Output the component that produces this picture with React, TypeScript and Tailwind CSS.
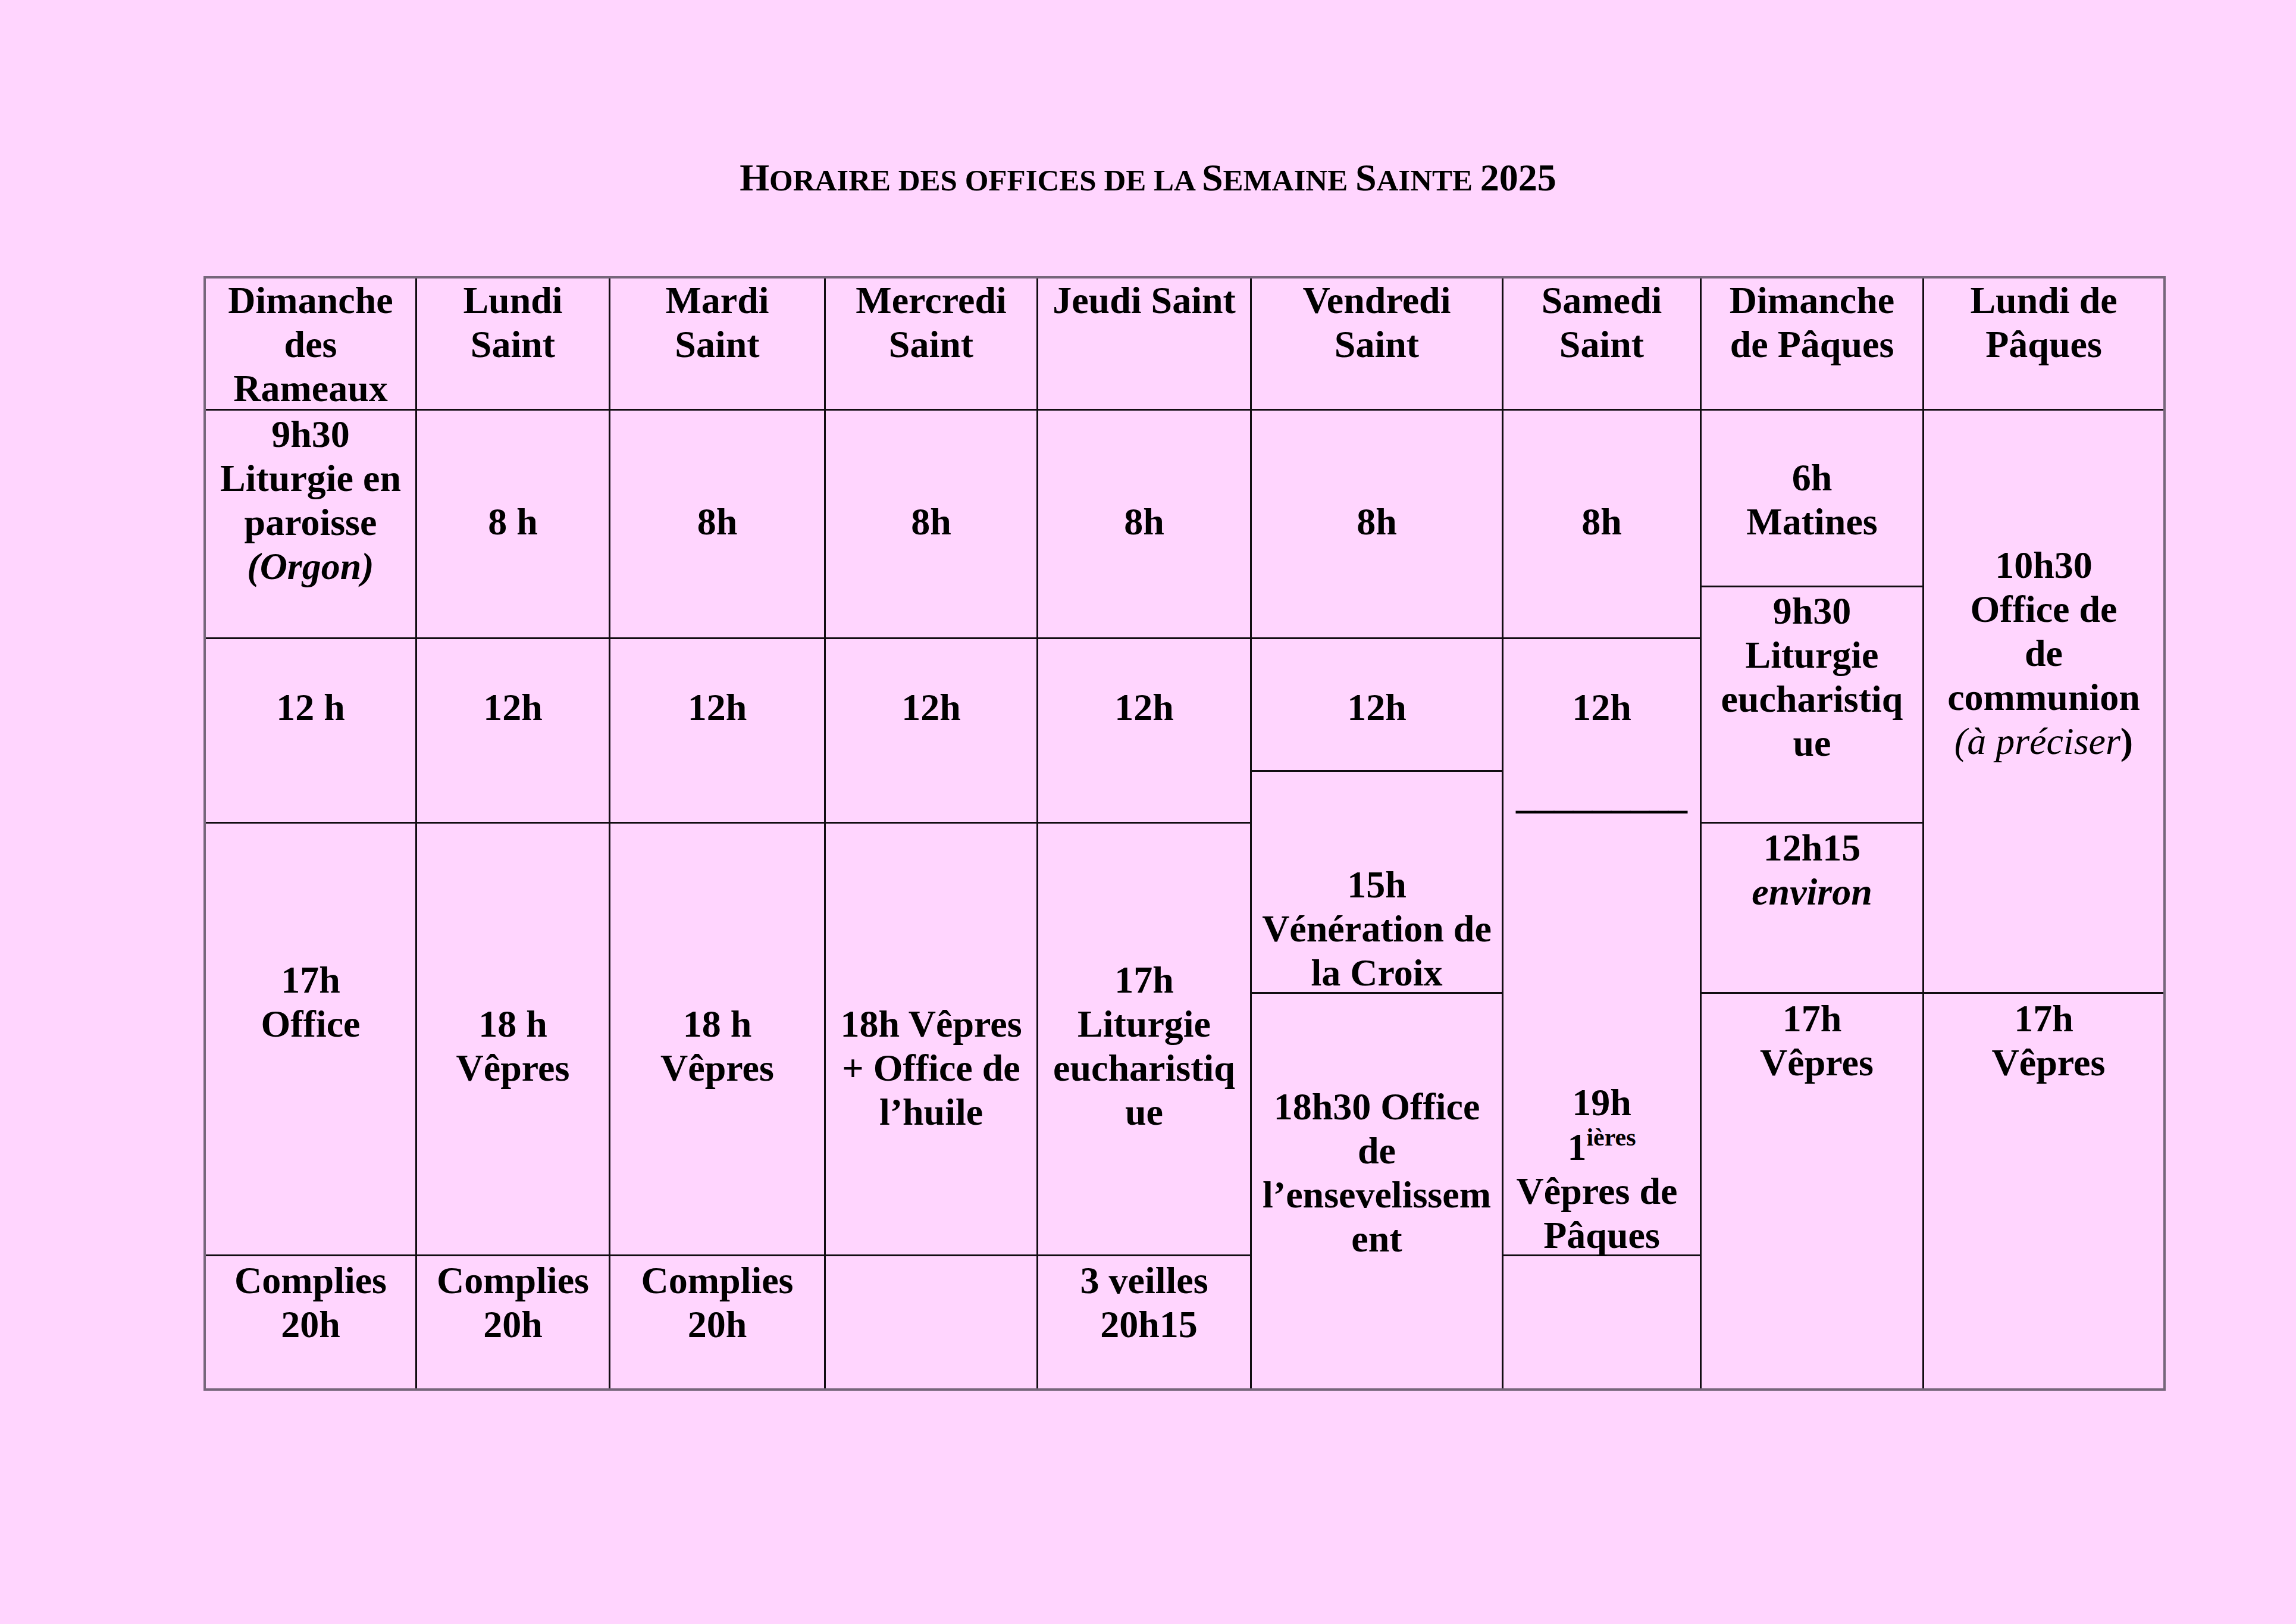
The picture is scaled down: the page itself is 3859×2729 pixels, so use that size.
import type { ReactNode } from 'react'

function Cell({
  pos,
  pt,
  children,
  noR,
  noB,
}: {
  pos: string
  pt: string
  children?: ReactNode
  noR?: boolean
  noB?: boolean
}) {
  return (
    <div
      className={`${pos} ${pt} ${noR ? '' : 'border-r-[3px]'} ${noB ? '' : 'border-b-[3px]'} border-[#120d12] text-center whitespace-nowrap`}
    >
      {children}
    </div>
  )
}

const Sm = ({ children }: { children: ReactNode }) => <span className="text-[51px] leading-none">{children}</span>

export default function App() {
  return (
    <div className="min-h-[2729px] w-full bg-[#ffd5fe] font-['Liberation_Serif',serif] font-bold text-[64px] leading-[74px] text-black">
      <div className="pt-[262px] text-center">
        H<Sm>ORAIRE DES OFFICES DE LA </Sm>S<Sm>EMAINE </Sm>S<Sm>AINTE </Sm>2025
      </div>

      <div className="ml-[342px] mt-[128px] w-[3298px] border-[4px] border-[#76667b]">
        <div className="grid grid-cols-[355px_325px_362px_357px_359px_423px_333px_374px_402px] grid-rows-[222px_297px_87px_223px_87px_286px_441px_222px]">
          {/* headers */}
          <Cell pos="col-start-1 row-start-1" pt="pt-0">Dimanche<br />des<br />Rameaux</Cell>
          <Cell pos="col-start-2 row-start-1" pt="pt-0">Lundi<br />Saint</Cell>
          <Cell pos="col-start-3 row-start-1" pt="pt-0">Mardi<br />Saint</Cell>
          <Cell pos="col-start-4 row-start-1" pt="pt-0">Mercredi<br />Saint</Cell>
          <Cell pos="col-start-5 row-start-1" pt="pt-0">Jeudi Saint</Cell>
          <Cell pos="col-start-6 row-start-1" pt="pt-0">Vendredi<br />Saint</Cell>
          <Cell pos="col-start-7 row-start-1" pt="pt-0">Samedi<br />Saint</Cell>
          <Cell pos="col-start-8 row-start-1" pt="pt-0">Dimanche<br />de Pâques</Cell>
          <Cell pos="col-start-9 row-start-1" pt="pt-0" noR>Lundi de<br />Pâques</Cell>

          {/* Dimanche des Rameaux */}
          <Cell pos="col-start-1 row-start-2 row-span-2" pt="pt-[3px]">
            9h30<br />Liturgie en<br />paroisse<br /><i>(Orgon)</i>
          </Cell>
          <Cell pos="col-start-1 row-start-4 row-span-2" pt="pt-[78px]">12 h</Cell>
          <Cell pos="col-start-1 row-start-6 row-span-2" pt="pt-[226px]">17h<br />Office</Cell>
          <Cell pos="col-start-1 row-start-8" pt="pt-[4px]" noB>Complies<br />20h</Cell>

          {/* Lundi Saint */}
          <Cell pos="col-start-2 row-start-2 row-span-2" pt="pt-[150px]">8 h</Cell>
          <Cell pos="col-start-2 row-start-4 row-span-2" pt="pt-[78px]">12h</Cell>
          <Cell pos="col-start-2 row-start-6 row-span-2" pt="pt-[300px]">18 h<br />Vêpres</Cell>
          <Cell pos="col-start-2 row-start-8" pt="pt-[4px]" noB>Complies<br />20h</Cell>

          {/* Mardi Saint */}
          <Cell pos="col-start-3 row-start-2 row-span-2" pt="pt-[150px]">8h</Cell>
          <Cell pos="col-start-3 row-start-4 row-span-2" pt="pt-[78px]">12h</Cell>
          <Cell pos="col-start-3 row-start-6 row-span-2" pt="pt-[300px]">18 h<br />Vêpres</Cell>
          <Cell pos="col-start-3 row-start-8" pt="pt-[4px]" noB>Complies<br />20h</Cell>

          {/* Mercredi Saint */}
          <Cell pos="col-start-4 row-start-2 row-span-2" pt="pt-[150px]">8h</Cell>
          <Cell pos="col-start-4 row-start-4 row-span-2" pt="pt-[78px]">12h</Cell>
          <Cell pos="col-start-4 row-start-6 row-span-2" pt="pt-[300px]">
            18h Vêpres<br />+ Office de<br />l’huile
          </Cell>
          <Cell pos="col-start-4 row-start-8" pt="pt-[4px]" noB />

          {/* Jeudi Saint */}
          <Cell pos="col-start-5 row-start-2 row-span-2" pt="pt-[150px]">8h</Cell>
          <Cell pos="col-start-5 row-start-4 row-span-2" pt="pt-[78px]">12h</Cell>
          <Cell pos="col-start-5 row-start-6 row-span-2" pt="pt-[226px]">
            17h<br />Liturgie<br />eucharistiq<br />ue
          </Cell>
          <Cell pos="col-start-5 row-start-8" pt="pt-[4px]" noB>3 veilles<br />{'\u00a0'}20h15</Cell>

          {/* Vendredi Saint */}
          <Cell pos="col-start-6 row-start-2 row-span-2" pt="pt-[150px]">8h</Cell>
          <Cell pos="col-start-6 row-start-4" pt="pt-[78px]">12h</Cell>
          <Cell pos="col-start-6 row-start-5 row-span-2" pt="pt-[153px]">
            15h<br />Vénération de<br />la Croix
          </Cell>
          <Cell pos="col-start-6 row-start-7 row-span-2" pt="pt-[153px]" noB>
            18h30 Office<br />de<br />l’ensevelissem<br />ent
          </Cell>

          {/* Samedi Saint */}
          <Cell pos="col-start-7 row-start-2 row-span-2" pt="pt-[150px]">8h</Cell>
          <Cell pos="col-start-7 row-start-4 row-span-2" pt="pt-[78px]" noB>
            12h<br />{'\u00a0'}<br />_________
          </Cell>
          <Cell pos="col-start-7 row-start-6 row-span-2" pt="pt-[432px]">
            19h<br />1<span className="text-[42px] leading-none align-[24px]">ières</span><br />Vêpres de{'\u00a0'}<br />Pâques
          </Cell>
          <Cell pos="col-start-7 row-start-8" pt="pt-[4px]" noB />

          {/* Dimanche de Pâques */}
          <Cell pos="col-start-8 row-start-2" pt="pt-[76px]">6h<br />Matines</Cell>
          <Cell pos="col-start-8 row-start-3 row-span-3" pt="pt-[3px]">
            9h30<br />Liturgie<br />eucharistiq<br />ue
          </Cell>
          <Cell pos="col-start-8 row-start-6" pt="pt-[4px]">12h15<br /><i>environ</i></Cell>
          <Cell pos="col-start-8 row-start-7 row-span-2" pt="pt-[5px]" noB>17h<br />{'\u00a0'}Vêpres</Cell>

          {/* Lundi de Pâques */}
          <Cell pos="col-start-9 row-start-2 row-span-5" pt="pt-[223px]" noR>
            10h30<br />Office de<br />de<br />communion<br />
            <span className="font-normal italic">(à préciser</span>)
          </Cell>
          <Cell pos="col-start-9 row-start-7 row-span-2" pt="pt-[5px]" noR noB>17h<br />{'\u00a0'}Vêpres</Cell>
        </div>
      </div>
    </div>
  )
}
